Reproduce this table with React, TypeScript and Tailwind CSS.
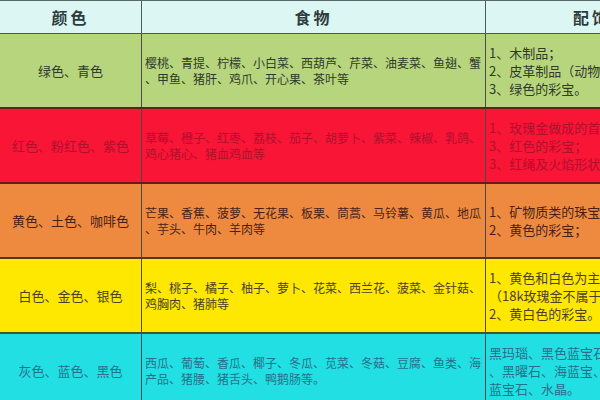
const font = { fontFamily: '"Noto Sans CJK SC", "Noto Sans", sans-serif' };

type Row = {
  name: string;
  food: string;
  items: string[];
  bg: string;
  text: string;
  line: string;
};

const rows: Row[] = [
  {
    name: "绿色、青色",
    food: "樱桃、青提、柠檬、小白菜、西葫芦、芹菜、油麦菜、鱼翅、蟹、甲鱼、猪肝、鸡爪、开心果、茶叶等",
    items: ["1、木制品；", "2、皮革制品（动物皮毛）；", "3、绿色的彩宝。"],
    bg: "bg-[#b7d57d]",
    text: "text-[#2f3a2a]",
    line: "border-[#5a2418]",
  },
  {
    name: "红色、粉红色、紫色",
    food: "草莓、橙子、红枣、荔枝、茄子、胡萝卜、紫菜、辣椒、乳鸽、鸡心猪心、猪血鸡血等",
    items: ["1、玫瑰金做成的首饰；", "3、红色的彩宝；", "3、红绳及火焰形状的饰品。"],
    bg: "bg-[#f91536]",
    text: "text-[#b0102e]",
    line: "border-[#6a1a1a]",
  },
  {
    name: "黄色、土色、咖啡色",
    food: "芒果、香蕉、菠萝、无花果、板栗、茼蒿、马铃薯、黄瓜、地瓜、芋头、牛肉、羊肉等",
    items: ["1、矿物质类的珠宝；", "2、黄色的彩宝；"],
    bg: "bg-[#ee8a3f]",
    text: "text-[#4a1f1a]",
    line: "border-[#5a3418]",
  },
  {
    name: "白色、金色、银色",
    food: "梨、桃子、橘子、柚子、萝卜、花菜、西兰花、菠菜、金针菇、鸡胸肉、猪肺等",
    items: ["1、黄色和白色为主的首饰", "（18k玫瑰金不属于此类）", "2、黄白色的彩宝。"],
    bg: "bg-[#fee802]",
    text: "text-[#4a4226]",
    line: "border-[#3d5a2a]",
  },
  {
    name: "灰色、蓝色、黑色",
    food: "西瓜、葡萄、香瓜、椰子、冬瓜、苋菜、冬菇、豆腐、鱼类、海产品、猪腰、猪舌头、鸭鹅肠等。",
    items: ["黑玛瑙、黑色蓝宝石、黑钻石", "、黑曜石、海蓝宝、蓝色托帕石", "蓝宝石、水晶。"],
    bg: "bg-[#22dfe3]",
    text: "text-[#2a6f8a]",
    line: "border-[#2a4a5a]",
  },
];

export default function App() {
  return (
    <div className="w-[600px] h-[400px] overflow-hidden bg-white" style={font}>
      <div className="w-[700px] border-t border-[#5a6a6a]">
        <div className="grid grid-cols-[142px_344px_212px] h-[33px] bg-[#dcf6f4] border-b border-[#4a5a5a] text-[16px] font-bold text-[#2e3b3b]">
          <div className="flex items-center justify-center tracking-[3px] border-r border-[#4a5a5a]">颜色</div>
          <div className="flex items-center justify-center tracking-[3px] border-r border-[#4a5a5a]">食物</div>
          <div className="flex items-center justify-center tracking-[3px]">配饰</div>
        </div>
        {rows.map((r) => (
          <div
            key={r.name}
            className={`grid grid-cols-[142px_344px_212px] h-[75px] border-b-2 ${r.bg} ${r.text} ${r.line}`}
          >
            <div className="flex items-center justify-center text-[13px] border-r border-[#4a4a4a]">
              {r.name}
            </div>
            <div className="flex items-center pl-[3px] text-[12px] leading-[16px] border-r border-[#4a4a4a]">
              <p className="break-all [line-break:anywhere]">{r.food}</p>
            </div>
            <div className="flex flex-col justify-center pl-[3px] text-[13px] leading-[18px] overflow-hidden">
              {r.items.map((t) => (
                <div key={t} className="whitespace-nowrap">
                  {t}
                </div>
              ))}
            </div>
          </div>
        ))}
      </div>
    </div>
  );
}
